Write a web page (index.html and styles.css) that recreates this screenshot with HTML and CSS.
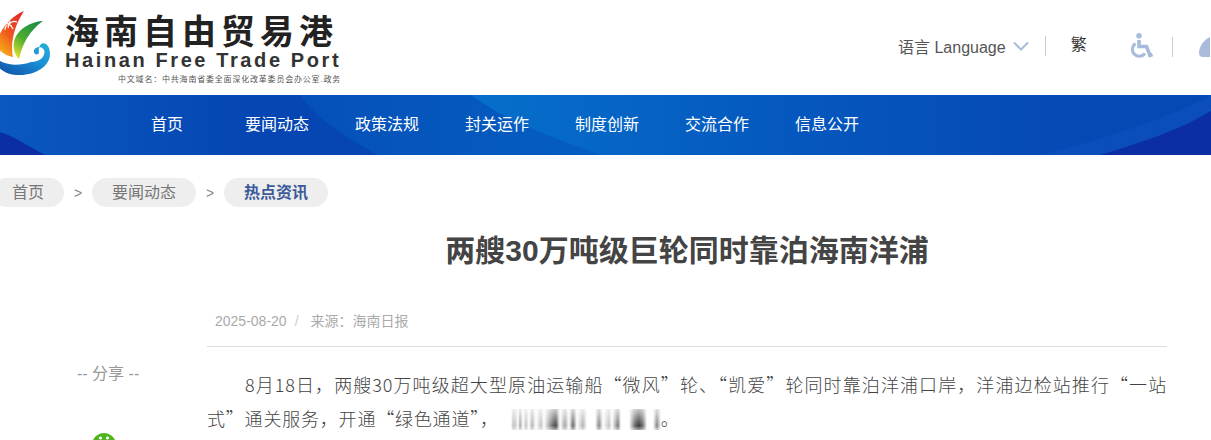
FILE: index.html
```html
<!DOCTYPE html>
<html lang="zh-CN">
<head>
    <meta charset="UTF-8">
    <title>两艘30万吨级巨轮同时靠泊海南洋浦</title>
    <link rel="stylesheet" href="styles.css">
</head>
<body>
    <header class="top">
        <div class="logo">
            <svg class="logo-mark" width="54" height="72" viewBox="0 0 54 72">
                <defs>
                    <linearGradient id="sail-red" x1="0.8" y1="0" x2="0.2" y2="1">
                        <stop offset="0" stop-color="#e3262b"/>
                        <stop offset="0.55" stop-color="#ee5a1c"/>
                        <stop offset="1" stop-color="#f8b41a"/>
                    </linearGradient>
                    <linearGradient id="sail-green" x1="0.9" y1="0" x2="0.3" y2="1">
                        <stop offset="0" stop-color="#128a45"/>
                        <stop offset="0.6" stop-color="#4cab32"/>
                        <stop offset="1" stop-color="#cfdc2c"/>
                    </linearGradient>
                    <linearGradient id="wave" x1="0" y1="1" x2="1" y2="0">
                        <stop offset="0" stop-color="#0f4fa5"/>
                        <stop offset="0.6" stop-color="#1a8fd6"/>
                        <stop offset="1" stop-color="#26b3dc"/>
                    </linearGradient>
                </defs>
                <path d="M24 7 C12 12 3 22 -2 34 L-2 44 C2 50 8 52 13 53 C10 40 14 22 24 7Z" fill="url(#sail-red)"/>
                <path d="M8 24 L10 17 M9 20 C6 18 5 19 3 21 M9 20 C12 17 15 17 17 18 M9 20 C6 21 5 23 5 26 M9 20 C11 21 12 23 13 25" fill="none" stroke="#fff" stroke-width="1.2"/>
                <path d="M43 17 C30 18 20 24 15 34 C12 42 14 50 19 55 C22 40 30 26 43 17Z" fill="url(#sail-green)"/>
                <path d="M31 58 C42 58 46 50 44 46 C42 42 36 42 34 46 C33 50 37 52 39 49 C37 36 50 36 50 50 C50 62 36 71 20 71 C10 71 2 68 -2 62 L-2 56 C8 62 20 62 31 58Z" fill="url(#wave)"/>
            </svg>
            <div class="logo-text">
                <div class="logo-cn">海南自由贸易港</div>
                <div class="logo-en">Hainan Free Trade Port</div>
                <div class="logo-domain">中文域名：中共海南省委全面深化改革委员会办公室.政务</div>
            </div>
        </div>
        <div class="tools">
            <div class="lang">语言 Language
                <svg width="16" height="10" viewBox="0 0 16 10"><path d="M1 1.5 L8 8.5 L15 1.5" fill="none" stroke="#a9bbdb" stroke-width="2"/></svg>
            </div>
            <span class="sep"></span>
            <div class="trad">繁</div>
            <svg class="wheel" width="24" height="25" viewBox="0 0 24 25">
                <circle cx="10" cy="2.8" r="2.8" fill="#a9bbdb"/>
                <path d="M10 7 V13.5 H17.5 L21 22.5 L23.5 21.5" fill="none" stroke="#a9bbdb" stroke-width="3.6"/>
                <path d="M6.5 10.5 A7 7 0 1 0 16 20.5" fill="none" stroke="#a9bbdb" stroke-width="3"/>
            </svg>
            <span class="sep sep-last"></span>
            <svg class="user" width="11" height="20" viewBox="0 0 11 20"><path d="M11 0 C5 3 0 9 0 16 Q0 20 4 20 H11Z" fill="#a9bbdb"/></svg>
        </div>
    </header>

    <nav class="nav">
        <svg class="nav-bg" width="1211" height="60" viewBox="0 0 1211 60">
            <defs>
                <linearGradient id="band-one" gradientUnits="userSpaceOnUse" x1="300" y1="0" x2="640" y2="0">
                    <stop offset="0" stop-color="#0550b9"/>
                    <stop offset="1" stop-color="#0560c2"/>
                </linearGradient>
                <linearGradient id="band-two" gradientUnits="userSpaceOnUse" x1="471" y1="0" x2="1060" y2="0">
                    <stop offset="0" stop-color="#0670cb"/>
                    <stop offset="0.5" stop-color="#0559bf"/>
                    <stop offset="1" stop-color="#0649b5"/>
                </linearGradient>
            </defs>
            <path d="M300 0 H640 V60 H378 C345 42 318 25 300 0Z" fill="url(#band-one)"/>
            <path d="M471 0 H1211 V60 H602 C550 42 505 25 471 0Z" fill="url(#band-two)"/>
            <path d="M0 37 C15 42 30 52 45 60 H0Z" fill="#0b2fa3"/>
            <path d="M1040 60 C1100 45 1165 25 1211 0 V60Z" fill="#0a4dbb"/>
            <path d="M1100 60 C1140 48 1180 35 1211 16 V60Z" fill="#0c2ea3"/>
        </svg>
        <a class="nav-item">首页</a>
        <a class="nav-item">要闻动态</a>
        <a class="nav-item">政策法规</a>
        <a class="nav-item">封关运作</a>
        <a class="nav-item">制度创新</a>
        <a class="nav-item">交流合作</a>
        <a class="nav-item">信息公开</a>
    </nav>

    <div class="crumbs">
        <a class="pill pill-first">首页</a>
        <span class="arrow">&gt;</span>
        <a class="pill">要闻动态</a>
        <span class="arrow">&gt;</span>
        <a class="pill pill-on">热点资讯</a>
    </div>

    <div class="main">
        <aside class="share">
            <div class="share-label">-- 分享 --</div>
            <svg class="wechat" width="24" height="24" viewBox="0 0 24 24">
                <circle cx="12" cy="12" r="12" fill="#4fb41e"/>
                <circle cx="8.5" cy="5" r="1.6" fill="#fff"/>
                <circle cx="15.5" cy="5" r="1.6" fill="#fff"/>
            </svg>
        </aside>
        <article class="article">
            <h1 class="title">两艘30万吨级巨轮同时靠泊海南洋浦</h1>
            <div class="meta"><span>2025-08-20</span><span class="slash">/</span><span>来源：海南日报</span></div>
            <p class="para">8月18日，两艘30万吨级超大型原油运输船“微风”轮、“凯爱”轮同时靠泊洋浦口岸，洋浦边检站推行“一站式”通关服务，开通“绿色通道”，<span class="smear"></span>。</p>
        </article>
    </div>
</body>
</html>
```

FILE: styles.css
```css
html, body {
    margin: 0;
    height: 440px;
    overflow: hidden;
}
body {
    background: #fff;
    font-family: "Liberation Sans", "Noto Sans CJK SC", sans-serif;
    color: #333;
}
.top {
    height: 95px;
    display: flex;
    justify-content: space-between;
    overflow: hidden;
}
.logo {
    display: flex;
}
.logo-mark {
    margin-top: 4px;
    flex: none;
}
.logo-text {
    margin-left: 11px;
    padding-top: 13px;
}
.logo-cn {
    font-size: 34px;
    line-height: 38px;
    font-weight: 700;
    letter-spacing: 5px;
    color: #222;
    white-space: nowrap;
}
.logo-en {
    font-size: 20px;
    line-height: 19px;
    font-weight: 700;
    letter-spacing: 2.6px;
    color: #333;
    white-space: nowrap;
}
.logo-domain {
    margin: 4px 0 0 53px;
    font-size: 8px;
    line-height: 12px;
    letter-spacing: .8px;
    color: #555;
    white-space: nowrap;
}
.tools {
    display: flex;
    align-items: flex-start;
    padding-top: 32px;
    width: 313px;
    flex: none;
}
.lang {
    display: flex;
    align-items: center;
    gap: 7px;
    height: 28px;
    font-size: 16px;
    color: #555;
    white-space: nowrap;
}
.sep {
    width: 1px;
    height: 20px;
    margin: 4px 0 0 16px;
    background: #ccc;
}
.trad {
    margin-left: 25px;
    font-size: 16px;
    line-height: 26px;
    color: #333;
}
.wheel {
    margin: 1px 0 0 42px;
    flex: none;
}
.sep-last {
    margin-left: 19px;
    margin-top: 5px;
}
.user {
    margin: 5px 0 0 26px;
    flex: none;
}
.nav {
    position: relative;
    height: 60px;
    display: flex;
    padding-left: 112px;
    background: linear-gradient(90deg, #0a58c0 0, #0546b2 250px);
    overflow: hidden;
}
.nav-bg {
    position: absolute;
    left: 0;
    top: 0;
}
.nav-item {
    position: relative;
    width: 110px;
    text-align: center;
    font-size: 16px;
    line-height: 60px;
    color: #fff;
}
.crumbs {
    display: flex;
    align-items: center;
    height: 29px;
    margin: 23px 0 0 -8px;
}
.pill {
    padding: 0 20px;
    height: 29px;
    line-height: 29px;
    border-radius: 15px;
    background: #eee;
    font-size: 16px;
    color: #777;
}
.arrow {
    width: 28px;
    text-align: center;
    font-size: 14px;
    color: #888;
}
.pill-on {
    color: #3c5a9a;
    font-weight: 700;
}
.main {
    display: flex;
    margin-top: 24px;
    padding-left: 77px;
}
.share {
    width: 130px;
    flex: none;
    padding-top: 133px;
}
.share-label {
    font-size: 16px;
    line-height: 20px;
    color: #999;
    white-space: nowrap;
}
.wechat {
    display: block;
    margin: 49px 0 0 15px;
}
.article {
    width: 960px;
}
.title {
    margin: 0 0 34px;
    font-size: 30px;
    line-height: 40px;
    font-weight: 700;
    text-align: center;
    color: #444;
}
.meta {
    display: flex;
    height: 41px;
    padding: 0 8px;
    font-size: 14px;
    line-height: 32px;
    color: #aaa;
    border-bottom: 1px solid #ddd;
}
.slash {
    margin: 0 12px 0 8px;
    color: #ccc;
}
.para {
    margin: 20px 0 0;
    font-family: "Noto Sans CJK SC", serif;
    font-size: 18px;
    font-weight: 300;
    letter-spacing: .8px;
    line-height: 34px;
    text-indent: 38px;
    color: #444;
    text-align: justify;
}
.smear {
    display: inline-block;
    width: 150px;
    height: 21px;
    margin-left: 12px;
    vertical-align: -4px;
    background: linear-gradient(90deg,
        #fff 0, #bbb 2px, #ccc 5px, #fff 7px, #999 9px, #fff 12px, #bbb 15px, #fff 18px, #aaa 21px, #fff 25px,
        #bbb 30px, #fff 33px, #555 42px, #333 45px, #fff 49px, #999 54px, #fff 58px, #555 62px, #fff 66px,
        #aaa 72px, #fff 76px, #fff 84px, #777 88px, #fff 92px, #bbb 98px, #fff 101px, #666 107px, #fff 110px,
        #fff 118px, #555 124px, #222 128px, #666 132px, #fff 136px, #fff 142px, #777 146px, #fff 150px);
    -webkit-mask-image: linear-gradient(180deg, rgba(0,0,0,.25) 0, rgba(0,0,0,.9) 80%, rgba(0,0,0,.4) 100%);
    mask-image: linear-gradient(180deg, rgba(0,0,0,.25) 0, rgba(0,0,0,.9) 80%, rgba(0,0,0,.4) 100%);
}
```
